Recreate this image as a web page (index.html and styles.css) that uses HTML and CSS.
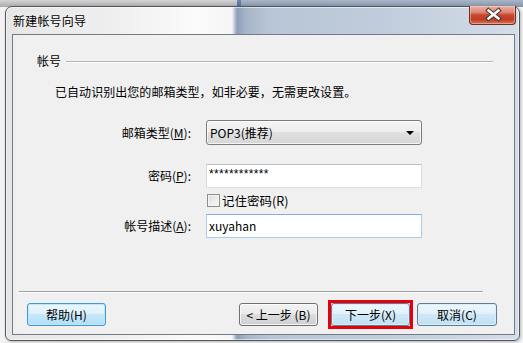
FILE: index.html
```html
<!DOCTYPE html>
<html lang="zh-CN">
<head>
  <meta charset="UTF-8">
  <title>新建帐号向导</title>
  <link rel="stylesheet" href="styles.css">
</head>
<body>
  <div class="window">
    <div class="titlebar">
      <span class="title">新建帐号向导</span>
      <div class="close">
        <svg width="47" height="19" viewBox="0 0 47 19">
          <path d="M19.5 5.5 L29.5 13.5 M29.5 5.5 L19.5 13.5" stroke="#4a3a36" stroke-width="4.6" stroke-linecap="square" fill="none"/>
          <path d="M19.5 5.5 L29.5 13.5 M29.5 5.5 L19.5 13.5" stroke="#ffffff" stroke-width="2.4" stroke-linecap="square" fill="none"/>
        </svg>
      </div>
    </div>

    <div class="client">
      <div class="group-head">
        <span>帐号</span>
        <i class="rule"></i>
      </div>
      <p class="intro">已自动识别出您的邮箱类型，如非必要，无需更改设置。</p>

      <div class="row row-combo">
        <label class="lbl">邮箱类型(<u>M</u>):</label>
        <div class="combo">POP3(推荐)<span class="arrow"></span></div>
      </div>
      <div class="row row-pass">
        <label class="lbl">密码(<u>P</u>):</label>
        <div class="edit pass">************</div>
      </div>
      <div class="row row-check">
        <span class="lbl"></span>
        <div class="check"><span class="box"></span>记住密码(R)</div>
      </div>
      <div class="row row-desc">
        <label class="lbl">帐号描述(<u>A</u>):</label>
        <div class="edit hover">xuyahan</div>
      </div>

      <div class="sep"></div>

      <div class="buttons">
        <div class="btn focus help">帮助(H)</div>
        <div class="btn back">&lt; 上一步 (B)</div>
        <div class="mark">
          <div class="btn blue">下一步(X)</div>
        </div>
        <div class="btn blue cancel">取消(C)</div>
      </div>
    </div>
  </div>
</body>
</html>
```

FILE: styles.css
```css
html, body {
  margin: 0;
  padding: 0;
}

body {
  width: 523px;
  height: 343px;
  overflow: hidden;
  font-family: "Noto Sans CJK SC", "Noto Sans", sans-serif;
  font-size: 12px;
  color: #000;
  background:
    linear-gradient(#6a88b2, #4d6c9c) 237px 0 / 4px 7px no-repeat,
    linear-gradient(#d4d4d4, #a9a9a9) 0 0 / 237px 7px no-repeat,
    linear-gradient(#a9b6c7, #8493aa) 241px 0 / 282px 7px no-repeat,
    #f3f3f3;
}

/* window frame */
.window {
  margin: 6px 0 0 5px;
  width: 515px;
  height: 335px;
  box-sizing: border-box;
  border: 1px solid #4f5862;
  border-radius: 7px 7px 6px 6px;
  display: flex;
  flex-direction: column;
  background: linear-gradient(90deg, #e6e6e6 0, #efefef 110px, #fbfbfb 190px, #f5f5f5 226px, #8d9eb7 231px, #a7b5c8 240px, #b8c5d6 262px, #c1cddc 380px, #d4dde8 513px);
  box-shadow: inset 0 0 0 1px rgba(255, 255, 255, 0.55), 1px 1px 3px rgba(0, 0, 0, 0.25);
}

.titlebar {
  height: 27px;
  display: flex;
  align-items: center;
  padding-left: 7px;
}

.title {
  line-height: 16px;
  margin-top: 1px;
  letter-spacing: 0.2px;
  text-shadow: 0 0 6px rgba(255, 255, 255, 0.9);
}

.close {
  margin-left: auto;
  margin-right: 3px;
  margin-top: -1px;
  align-self: flex-start;
  width: 47px;
  height: 19px;
  box-sizing: border-box;
  border: 1px solid #6a3026;
  border-top: none;
  border-radius: 0 0 4px 4px;
  background: linear-gradient(#eab3a5 0, #dc8672 35%, #c9462d 50%, #c13c24 75%, #d97658 100%);
  box-shadow: inset 0 0 0 1px rgba(255, 220, 210, 0.45);
}

.close svg {
  display: block;
  margin: -1px 0 0 -1px;
}

/* client area */
.client {
  margin: 0 4px 0 6px;
  height: 301px;
  box-sizing: border-box;
  border: 1px solid #737c86;
  background: #f0f0f0;
  display: flex;
  flex-direction: column;
}

.group-head {
  margin: 18px 21px 0 24px;
  height: 16px;
  line-height: 16px;
  display: flex;
  align-items: center;
}

.rule {
  flex: 1;
  margin-left: 5px;
  margin-top: 1px;
  border-top: 1px solid #b4b4b4;
  border-bottom: 1px solid #fff;
}

.intro {
  margin: 15px 0 0 42px;
  line-height: 16px;
  letter-spacing: 0.05px;
}

.row {
  display: flex;
  align-items: center;
}

.lbl {
  width: 178px;
  margin-right: 15px;
  text-align: right;
  line-height: 16px;
}

.row-combo { margin-top: 20px; }
.row-pass { margin-top: 19px; }
.row-check { margin-top: 6px; height: 13px; }
.row-desc { margin-top: 7px; }

.combo {
  width: 216px;
  height: 25px;
  box-sizing: border-box;
  border: 1px solid #7b7b7b;
  border-radius: 3px;
  padding-left: 3px;
  line-height: 22px;
  display: flex;
  align-items: center;
  background: linear-gradient(#f4f4f4 0, #ededed 50%, #e0e0e0 50%, #d6d6d6 100%);
  box-shadow: inset 0 0 0 1px rgba(255, 255, 255, 0.7);
}

.arrow {
  margin-left: auto;
  margin-right: 7px;
  width: 0;
  height: 0;
  border-left: 4px solid transparent;
  border-right: 4px solid transparent;
  border-top: 4px solid #000;
}

.edit {
  width: 216px;
  height: 24px;
  box-sizing: border-box;
  border: 1px solid #dadde3;
  border-top-color: #b8bcc4;
  background: #fff;
  padding-left: 2px;
  line-height: 21px;
}

.edit.pass {
  font-family: "Liberation Sans", sans-serif;
  font-size: 12px;
  line-height: 18px;
  letter-spacing: 0.3px;
}

.edit.hover {
  border-color: #a9cdef;
  border-top-color: #7fb1e2;
}

.check {
  display: flex;
  align-items: center;
  line-height: 16px;
  font-size: 12.5px;
}

.box {
  width: 13px;
  height: 13px;
  box-sizing: border-box;
  margin: 0 2px 0 1px;
  border: 1px solid #8e8f8f;
  background: linear-gradient(135deg, #dcdcdc, #fbfbfb);
  box-shadow: inset 0 0 0 1px #f4f4f4;
}

.sep {
  margin: 53px 31px 0 6px;
  border-top: 1px solid #a0a0a0;
  border-bottom: 1px solid #fff;
}

.buttons {
  margin-top: 10px;
  padding: 0 17px 0 14px;
  display: flex;
  align-items: flex-start;
}

.btn {
  width: 79px;
  height: 23px;
  box-sizing: border-box;
  border: 1px solid #707070;
  border-radius: 3px;
  text-align: center;
  line-height: 21px;
  background: linear-gradient(#f2f2f2 0, #ebebeb 50%, #dddddd 50%, #cfcfcf 100%);
  box-shadow: inset 0 0 0 1px rgba(255, 255, 255, 0.75);
}

.btn.focus {
  border-color: #3c9ad6;
  background: linear-gradient(#ecf7fd 0, #dcf1fc 50%, #c6e8fa 50%, #b3def6 100%);
  box-shadow: inset 0 0 0 1px #bfe6fb;
}

.btn.blue {
  border-color: #5c7e9a;
  background: linear-gradient(#eef7fc 0, #e0f1fb 50%, #cfe8f7 50%, #c1e0f3 100%);
  box-shadow: inset 0 0 0 1px #d7eefb;
}

.back { margin-left: auto; }

/* red highlight box drawn round the next button */
.mark {
  margin: -2px 0 -2px 10px;
  border: 3px solid #e6000a;
  padding: 0 0 0 0;
  margin-top: -3px;
}

.cancel {
  width: 80px;
  margin-left: 4px;
}
```
